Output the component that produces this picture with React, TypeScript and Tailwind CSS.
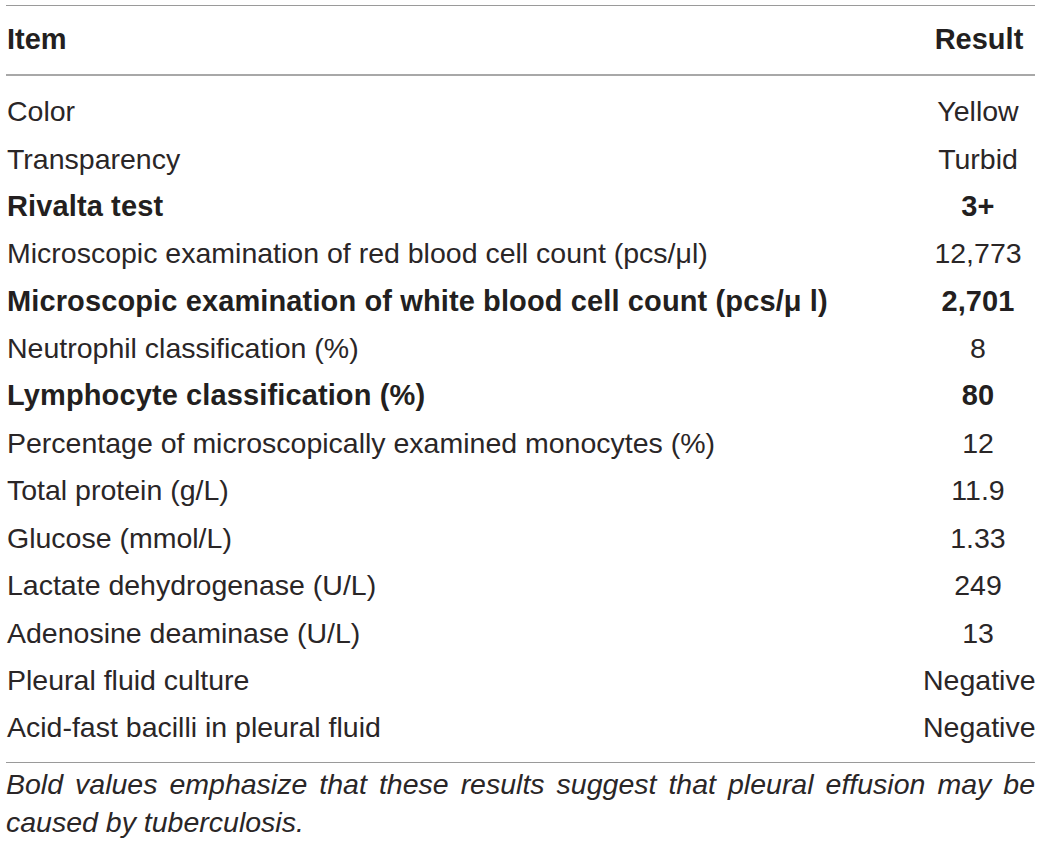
import React from 'react';

interface Row {
  item: string;
  result: string;
  bold?: boolean;
}

const rows: Row[] = [
  { item: 'Color', result: 'Yellow' },
  { item: 'Transparency', result: 'Turbid' },
  { item: 'Rivalta test', result: '3+', bold: true },
  { item: 'Microscopic examination of red blood cell count (pcs/\u03bcl)', result: '12,773' },
  { item: 'Microscopic examination of white blood cell count (pcs/\u03bc l)', result: '2,701', bold: true },
  { item: 'Neutrophil classification (%)', result: '8' },
  { item: 'Lymphocyte classification (%)', result: '80', bold: true },
  { item: 'Percentage of microscopically examined monocytes (%)', result: '12' },
  { item: 'Total protein (g/L)', result: '11.9' },
  { item: 'Glucose (mmol/L)', result: '1.33' },
  { item: 'Lactate dehydrogenase (U/L)', result: '249' },
  { item: 'Adenosine deaminase (U/L)', result: '13' },
  { item: 'Pleural fluid culture', result: 'Negative' },
  { item: 'Acid-fast bacilli in pleural fluid', result: 'Negative' },
];

export default function App() {
  return (
    <div
      className="w-[1040px] h-[849px] bg-white pl-[6px] pr-[5px] pt-[5px] text-[#231f20]"
      style={{ fontFamily: '"Liberation Sans", Arial, sans-serif' }}
    >
      {/* Table */}
      <div className="border-t border-[#9a9a9a]">
        {/* Header */}
        <div className="flex h-[70px] items-center justify-between border-b-2 border-[#a8a8a8] text-[29px] font-bold">
          <span className="pl-px">Item</span>
          <span className="mr-px w-[110px] text-center">Result</span>
        </div>

        {/* Body */}
        <div className="pt-[12px] pb-[11px]">
          {rows.map((row) => (
            <div
              key={row.item}
              className={`flex h-[47.4px] items-center justify-between ${
                row.bold ? 'text-[29px] font-bold tracking-[0.12px]' : 'text-[28.5px] font-normal text-[#2a2627]'
              }`}
            >
              <span className="pl-px">{row.item}</span>
              <span className="mr-[2px] w-[110px] text-center">{row.result}</span>
            </div>
          ))}
        </div>
      </div>

      {/* Footnote */}
      <div className="border-t border-[#9a9a9a] pt-[2px]">
        <p className="text-justify text-[28.5px] italic leading-[38px] text-[#2a2627]">
          Bold values emphasize that these results suggest that pleural effusion may be caused by tuberculosis.
        </p>
      </div>
    </div>
  );
}
